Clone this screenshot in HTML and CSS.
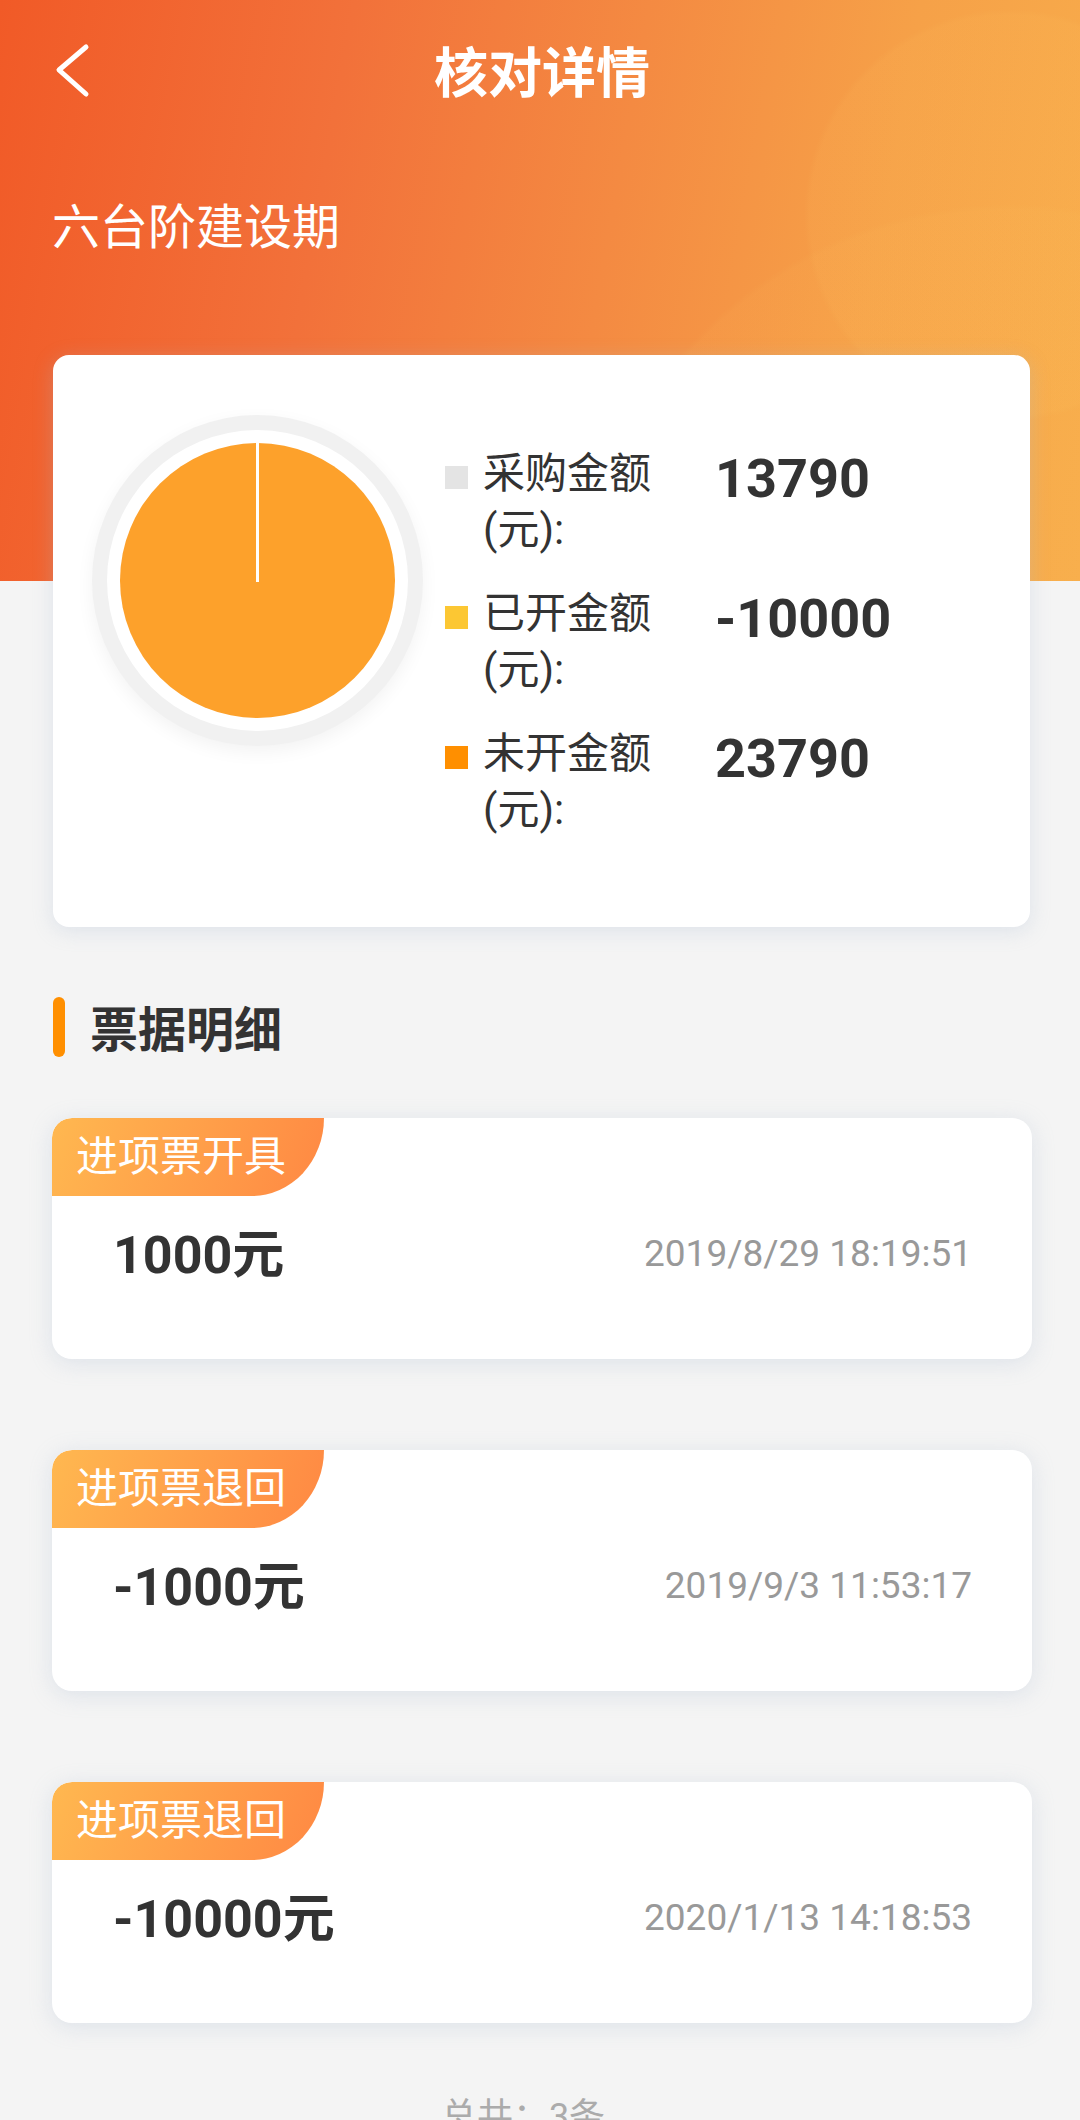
FILE: index.html
```html
<!DOCTYPE html>
<html lang="zh-CN">
<head>
<meta charset="utf-8">
<title>核对详情</title>
<link rel="stylesheet" href="styles.css">
</head>
<body>
<div class="page">
  <header class="nav">
    <svg class="nav-back" width="40" height="56" viewBox="0 0 40 56"><polyline points="32,4 5,27 32,51" fill="none" stroke="#fff" stroke-width="5" stroke-linecap="round" stroke-linejoin="round"/></svg>
    <h1 class="nav-title">核对详情</h1>
    <span></span>
  </header>
  <div class="project">六台阶建设期</div>

  <section class="summary">
    <div class="pie">
      <div class="pie-inner">
        <svg width="275" height="275" viewBox="0 0 275 275"><circle cx="137.5" cy="137.5" r="137.5" fill="#fda12b"/><line x1="137.5" y1="0" x2="137.5" y2="139" stroke="#fff" stroke-width="3"/></svg>
      </div>
    </div>
    <div class="legend">
      <div class="legend-row">
        <span class="legend-dot dot-gray"></span>
        <span class="legend-label">采购金额(元):</span>
        <span class="legend-value">13790</span>
      </div>
      <div class="legend-row">
        <span class="legend-dot dot-yellow"></span>
        <span class="legend-label">已开金额(元):</span>
        <span class="legend-value">-10000</span>
      </div>
      <div class="legend-row">
        <span class="legend-dot dot-orange"></span>
        <span class="legend-label">未开金额(元):</span>
        <span class="legend-value">23790</span>
      </div>
    </div>
  </section>

  <h2 class="section-title"><span class="section-text">票据明细</span></h2>

  <div class="bills">
    <div class="bill">
      <div class="bill-tag">进项票开具</div>
      <div class="bill-row"><span class="bill-amount">1000元</span><span class="bill-time">2019/8/29 18:19:51</span></div>
    </div>
    <div class="bill">
      <div class="bill-tag">进项票退回</div>
      <div class="bill-row"><span class="bill-amount">-1000元</span><span class="bill-time">2019/9/3 11:53:17</span></div>
    </div>
    <div class="bill">
      <div class="bill-tag">进项票退回</div>
      <div class="bill-row"><span class="bill-amount">-10000元</span><span class="bill-time">2020/1/13 14:18:53</span></div>
    </div>
  </div>

  <div class="total">总共：3条</div>
</div>
</body>
</html>
```
FILE: styles.css
```css
* { box-sizing: border-box; }
html, body { margin: 0; padding: 0; }
body {
  font-family: Roboto, "Noto Sans CJK SC", sans-serif;
  background: #f4f4f4;
  color: #333;
}
.page {
  width: 1080px;
  min-height: 2120px;
  padding: 0 48px 40px 52px;
  background:
    radial-gradient(circle at 1010px 215px, rgba(255, 200, 100, 0.09) 0 200px, rgba(255, 200, 100, 0) 206px),
    radial-gradient(circle at 1010px 640px, rgba(255, 200, 100, 0.07) 0 430px, rgba(255, 200, 100, 0) 436px),
    linear-gradient(100deg, #f15a27 0%, #f2713a 30%, #f48a42 55%, #f6a148 78%, #f8ad4b 100%);
  background-size: 100% 581px;
  background-repeat: no-repeat;
  background-color: #f4f4f4;
  overflow: hidden;
}
.nav {
  height: 150px;
  display: grid;
  grid-template-columns: 1fr auto 1fr;
  align-items: center;
}
.nav-back {
  align-self: start;
  margin: 43px 0 0 2px;
}
.nav-title {
  margin: 0;
  color: #fff;
  font-size: 54px;
  font-weight: 700;
  line-height: 60px;
}
.project {
  margin-top: 49px;
  color: #fff;
  font-size: 48px;
  line-height: 58px;
}

.summary {
  margin: 98px 2px 0 1px;
  height: 572px;
  background: #fff;
  border-radius: 16px;
  box-shadow: 0 4px 20px rgba(170, 185, 210, 0.3);
  display: flex;
  align-items: flex-start;
  padding: 60px 0 0 39px;
}
.pie {
  width: 331px;
  height: 331px;
  border-radius: 50%;
  background: #f1f1f1;
  box-shadow: 0 6px 18px rgba(0, 0, 0, 0.05);
  padding: 15px;
  flex: none;
}
.pie-inner {
  width: 301px;
  height: 301px;
  border-radius: 50%;
  background: #fff;
  padding: 13px;
}
.pie-inner svg { display: block; }

.legend {
  margin: 31px 0 0 22px;
  display: flex;
  flex-direction: column;
  gap: 28px;
}
.legend-row {
  display: flex;
  align-items: flex-start;
}
.legend-dot {
  width: 23px;
  height: 23px;
  margin-top: 20px;
  flex: none;
}
.dot-gray { background: #e4e4e4; }
.dot-yellow { background: #fcc733; }
.dot-orange { background: #ff8f00; }
.legend-label {
  width: 172px;
  margin-left: 15px;
  font-size: 42px;
  line-height: 56px;
  color: #333;
}
.legend-value {
  margin-left: 60px;
  font-size: 54px;
  font-weight: 700;
  line-height: 56px;
  margin-top: 5px;
  color: #333;
}

.section-title {
  margin: 70px 0 0 1px;
  display: flex;
  align-items: flex-start;
  height: 60px;
  font-size: 48px;
  font-weight: 700;
  color: #333;
}
.section-title::before {
  content: "";
  width: 12px;
  height: 60px;
  border-radius: 6px;
  background: #ff8f00;
  margin-right: 25px;
  flex: none;
}
.section-text {
  display: block;
  line-height: 60px;
  margin-top: 4px;
}

.bills {
  margin-top: 61px;
  display: flex;
  flex-direction: column;
  gap: 91px;
}
.bill {
  height: 241px;
  background: #fff;
  border-radius: 20px;
  box-shadow: 0 4px 22px rgba(170, 185, 210, 0.3);
  overflow: hidden;
}
.bill-tag {
  width: 272px;
  height: 78px;
  padding-left: 24px;
  border-radius: 20px 0 72px 0 / 20px 0 78px 0;
  background: linear-gradient(110deg, #ffb850 0%, #ff8843 100%);
  color: #fff;
  font-size: 42px;
  line-height: 78px;
}
.bill-row {
  margin-top: 24px;
  height: 60px;
  padding: 0 60px 0 61px;
  display: flex;
  align-items: center;
  justify-content: space-between;
}
.bill-amount {
  font-size: 52px;
  font-weight: 700;
  color: #333;
}
.bill-time {
  font-size: 37px;
  color: #999;
  margin-top: 6px;
}
.total {
  margin-top: 69px;
  padding-right: 38px;
  text-align: center;
  font-size: 36px;
  line-height: 50px;
  color: #ababab;
}
```
